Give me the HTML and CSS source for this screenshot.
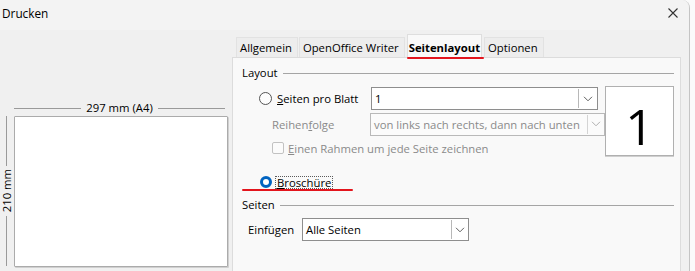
FILE: index.html
```html
<!DOCTYPE html>
<html lang="de">
<head>
<meta charset="utf-8">
<title>Drucken</title>
<link rel="stylesheet" href="styles.css">
</head>
<body>
<div class="window">
  <div class="titlebar">
    <span class="title">Drucken</span>
    <svg class="close" width="10" height="10" viewBox="0 0 10 10"><path d="M0.5 0.5 L9.5 9.5 M9.5 0.5 L0.5 9.5" stroke="#333" stroke-width="1.1" fill="none"/></svg>
  </div>
  <div class="main">
    <div class="preview-col">
      <div class="dim-h"><span class="hline"></span><span class="dim-text">297 mm (A4)</span><span class="hline"></span></div>
      <div class="paper-row">
        <div class="dim-v"><span class="vline"></span><span class="vtext">210 mm</span><span class="vline"></span></div>
        <div class="paper"></div>
      </div>
    </div>
    <div class="tabs-col">
      <div class="tabbar">
        <div class="tab">Allgemein</div>
        <div class="tab">OpenOffice Writer</div>
        <div class="tab active">Seitenlayout</div>
        <div class="tab">Optionen</div>
      </div>
      <div class="panel">
        <div class="legend"><span>Layout</span><span class="rule"></span></div>
        <div class="layout-grid">
          <div class="opt-row r1"><span class="radio"></span><span><u>S</u>eiten pro Blatt</span></div>
          <div class="combo c1"><span class="value">1</span><span class="btn"><svg width="10" height="6" viewBox="0 0 10 6"><path d="M1 0.8 L5 4.8 L9 0.8" stroke="#606060" stroke-width="1" fill="none"/></svg></span></div>
          <div class="pages-preview">1</div>
          <div class="dis-label r2">Reihen<u>f</u>olge</div>
          <div class="combo c2 disabled"><span class="value">von links nach rechts, dann nach unten</span><span class="btn"><svg width="10" height="6" viewBox="0 0 10 6"><path d="M1 0.8 L5 4.8 L9 0.8" stroke="#b0b0b0" stroke-width="1" fill="none"/></svg></span></div>
          <div class="check-row r3"><span class="checkbox"></span><span><u>E</u>inen Rahmen um jede Seite zeichnen</span></div>
        </div>
        <div class="opt-row brochure"><span class="radio on"></span><span class="focus"><u>B</u>roschüre</span></div>
        <div class="legend seiten"><span>Seiten</span><span class="rule"></span></div>
        <div class="insert-row">
          <span class="insert-label">Einfügen</span>
          <div class="combo c3"><span class="value">Alle Seiten</span><span class="btn"><svg width="10" height="6" viewBox="0 0 10 6"><path d="M1 0.8 L5 4.8 L9 0.8" stroke="#606060" stroke-width="1" fill="none"/></svg></span></div>
        </div>
      </div>
    </div>
  </div>
  <span class="mark mark-tab"></span>
  <span class="mark mark-radio"></span>
</div>
</body>
</html>
```
FILE: styles.css
```css
* { box-sizing: border-box; }
html, body { margin: 0; padding: 0; }
body {
  background: #fafafa;
  font-family: "Open Sans", "Noto Sans", sans-serif;
  font-size: 11.3px;
  color: #000;
  width: 695px;
  height: 271px;
  overflow: hidden;
}
u { text-decoration: underline; text-underline-offset: 1px; }

.window {
  position: relative;
  width: 690px;
  height: 271px;
  background: #f0f0f0;
  border-right: 1px solid #c4c4c4;
  border-top-right-radius: 8px;
  overflow: hidden;
  display: flex;
  flex-direction: column;
}

.titlebar {
  height: 30px;
  flex: none;
  background: #f3f3f3;
  display: flex;
  justify-content: space-between;
  align-items: flex-start;
  padding: 5px 11px 0 2px;
  line-height: 16px;
}
.title { font-size: 11.8px; }
.close { margin-top: 3px; }

.main {
  flex: 1;
  display: flex;
}

/* left preview */
.preview-col {
  width: 232px;
  flex: none;
  padding-top: 71px;
}
.dim-h {
  margin-left: 14px;
  width: 211px;
  height: 14px;
  display: flex;
  align-items: center;
  gap: 5px;
}
.hline { flex: 1; height: 1px; background: #9a9a9a; }
.dim-text { line-height: 14px; }
.paper-row {
  margin-top: 1px;
  display: flex;
}
.dim-v {
  width: 13px;
  height: 150px;
  display: flex;
  flex-direction: column;
  align-items: center;
  gap: 3px;
}
.vline { flex: 1; width: 1px; background: #9a9a9a; }
.vtext {
  writing-mode: vertical-rl;
  transform: rotate(180deg);
  line-height: 12px;
}
.paper {
  margin-left: 1px;
  width: 214px;
  height: 151px;
  background: #fff;
  border: 1px solid #ababab;
  border-radius: 1px;
  box-shadow: 1px 1px 0 #d0d0d0;
}

/* tabs */
.tabs-col {
  width: 449px;
  flex: none;
  display: flex;
  flex-direction: column;
}
.tabbar {
  height: 27px;
  flex: none;
  display: flex;
  align-items: flex-end;
  padding-left: 4px;
  gap: 1px;
}
.tab {
  height: 20px;
  line-height: 19px;
  padding: 0 5px 0 3px;
  background: #ededed;
  border: 1px solid #e2e2e2;
  border-bottom: none;
  white-space: nowrap;
}
.tab.active {
  height: 23px;
  padding: 3px 1px 0 1px;
  font-weight: 700;
  background: #f9f9f9;
  border-color: #dedede;
  margin: 0 1px;
}

.panel {
  flex: 1;
  background: #f9f9f9;
  border: 1px solid #dcdcdc;
  border-bottom: none;
  padding: 7px 6px 0 9px;
}

.legend {
  height: 16px;
  display: flex;
  align-items: center;
  line-height: 16px;
}
.legend .rule {
  flex: 1;
  height: 1px;
  background: #a5a5a5;
  margin-left: 5px;
}

.layout-grid {
  margin-top: 5px;
  display: grid;
  grid-template-columns: 128px 235px 69px;
  grid-template-rows: 25px 26px 22px;
}
.opt-row {
  display: flex;
  align-items: center;
  gap: 5px;
}
.r1 { grid-row: 1; grid-column: 1; padding-left: 17px; }
.radio {
  width: 13px;
  height: 13px;
  border-radius: 50%;
  border: 1px solid #555;
  background: #fdfdfd;
  flex: none;
}
.radio.on {
  width: 12px;
  height: 12px;
  border: 3px solid #0064c1;
  background: #fff;
}

.combo {
  height: 23px;
  align-self: center;
  background: #fff;
  border: 1px solid #8e8e8e;
  display: flex;
  align-items: stretch;
}
.combo .value {
  flex: 1;
  padding-left: 3px;
  line-height: 21px;
  white-space: nowrap;
  overflow: hidden;
}
.combo .btn {
  width: 18px;
  flex: none;
  border-left: 1px solid #b8b8b8;
  display: flex;
  align-items: center;
  justify-content: center;
  margin: 1px 1px 1px 0;
}
.c1 { grid-row: 1; grid-column: 2; width: 227px; margin-left: 1px; }
.c2 { grid-row: 2; grid-column: 2; width: 235px; }
.combo.disabled { border-color: #b9b9b9; background: #fbfbfb; }
.combo.disabled .value { color: #8a8a8a; }
.combo.disabled .btn { width: 16px; border-left-color: #d4d4d4; }

.pages-preview {
  grid-row: 1 / span 3;
  grid-column: 3;
  align-self: start;
  height: 70px;
  background: #fff;
  border: 1px solid #b0b0b0;
  box-shadow: 0 1px 0 #cfcfcf;
  font-family: "Open Sans", "Liberation Sans", sans-serif;
  font-size: 50px;
  line-height: 70px;
  text-align: center;
  padding-top: 4px;
}

.dis-label {
  grid-row: 2;
  grid-column: 1;
  align-self: center;
  padding-left: 30px;
  color: #8a8a8a;
}
.check-row {
  grid-row: 3;
  grid-column: 1 / span 2;
  display: flex;
  align-items: center;
  gap: 4px;
  padding-left: 30px;
  color: #8a8a8a;
}
.checkbox {
  width: 12px;
  height: 12px;
  border: 1px solid #c2c2c2;
  border-radius: 2px;
  background: #fbfbfb;
  flex: none;
}

.brochure {
  margin-top: 13px;
  height: 20px;
  padding-left: 18px;
  gap: 3px;
}
.focus {
  border: 1px dotted #5a5a5a;
  padding: 0 1px;
  line-height: 11px;
}

.seiten { margin-top: 5px; }

.insert-row {
  margin-top: 5px;
  display: flex;
  align-items: center;
  padding-left: 6px;
}
.insert-label { width: 54px; }
.c3 { width: 167px; }
.c3 .btn { width: 16px; }

.mark {
  position: absolute;
  height: 2px;
  background: #e3151d;
  border-radius: 1px;
}
.mark-tab { left: 407px; top: 57px; width: 77px; }
.mark-radio { left: 242px; top: 189px; width: 111px; }
```
